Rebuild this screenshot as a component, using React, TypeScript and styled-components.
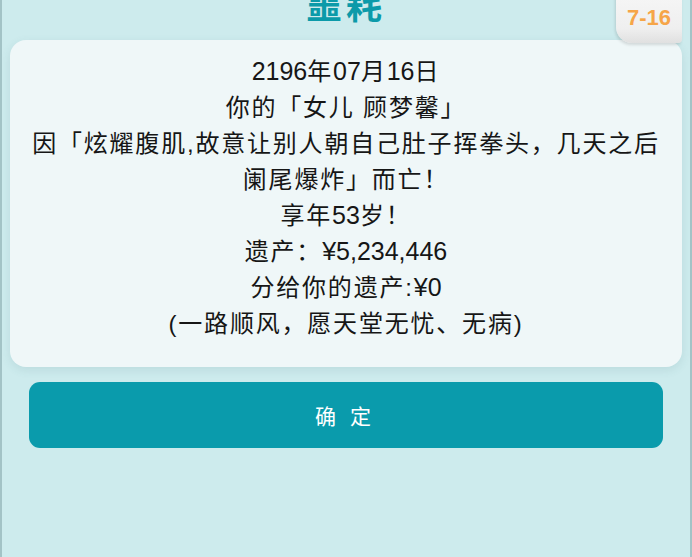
import React from "react"
import styled, { createGlobalStyle } from "styled-components"

const GlobalStyle = createGlobalStyle`
  html, body {
    margin: 0;
    padding: 0;
    background: #cdebed;
  }
  body {
    font-family: "Liberation Sans", "Noto Sans CJK SC", sans-serif;
  }
`

const Page = styled.div`
  position: relative;
  box-sizing: border-box;
  width: 692px;
  height: 557px;
  overflow: hidden;
  background: #cdebed;
  border-left: 2px solid #a3c3c6;
  border-right: 2px solid #a3c3c6;
  padding: 0 8px;
`

const Title = styled.h1`
  margin: -15px 0 0;
  height: 55px;
  line-height: 36px;
  text-align: center;
  font-size: 36px;
  font-weight: 700;
  letter-spacing: 4px;
  color: #0b9aa9;
  font-family: "Noto Sans CJK SC", sans-serif;
`

const DateTag = styled.div`
  position: absolute;
  top: -6px;
  right: 8px;
  width: 66px;
  height: 49px;
  box-sizing: border-box;
  padding-top: 11px;
  text-align: center;
  font-size: 22px;
  font-weight: 700;
  color: #f6a548;
  background: linear-gradient(180deg, #f6f6f6 0%, #efefef 70%, #e0e0e0 100%);
  border-radius: 0 0 4px 16px;
  box-shadow: -1px 2px 3px rgba(0, 0, 0, 0.12);
  z-index: 2;
`

const Card = styled.div`
  background: #eff7f8;
  border-radius: 16px;
  padding: 14px 20px 25px;
  box-shadow: 0 3px 10px rgba(60, 110, 115, 0.12);
  text-align: center;
  color: #161616;
  font-size: 24px;
  line-height: 36px;
  letter-spacing: 1.8px;
`

const Line = styled.div`
  height: 36px;
`

const Num = styled.span`
  letter-spacing: 0;
  font-size: 25px;
  line-height: 1;
`

const Confirm = styled.button`
  display: block;
  width: 634px;
  height: 66px;
  margin: 15px auto 0;
  border: none;
  border-radius: 11px;
  background: #0a9bac;
  color: #fff;
  font-family: "Noto Sans CJK SC", sans-serif;
  font-size: 21px;
  letter-spacing: 14px;
  text-indent: 8px;
  cursor: pointer;
`

export default function App() {
  return (
    <Page>
      <GlobalStyle />
      <Title>噩耗</Title>
      <DateTag>7-16</DateTag>
      <Card>
        <Line>
          <Num>2196</Num>年<Num>07</Num>月<Num>16</Num>日
        </Line>
        <Line>你的「女儿 顾梦馨」</Line>
        <Line>因「炫耀腹肌,故意让别人朝自己肚子挥拳头，几天之后</Line>
        <Line>阑尾爆炸」而亡！</Line>
        <Line>
          享年<Num>53</Num>岁！
        </Line>
        <Line>
          遗产：<Num>¥5,234,446</Num>
        </Line>
        <Line>
          分给你的遗产:<Num>¥0</Num>
        </Line>
        <Line>(一路顺风，愿天堂无忧、无病)</Line>
      </Card>
      <Confirm>确定</Confirm>
    </Page>
  )
}
